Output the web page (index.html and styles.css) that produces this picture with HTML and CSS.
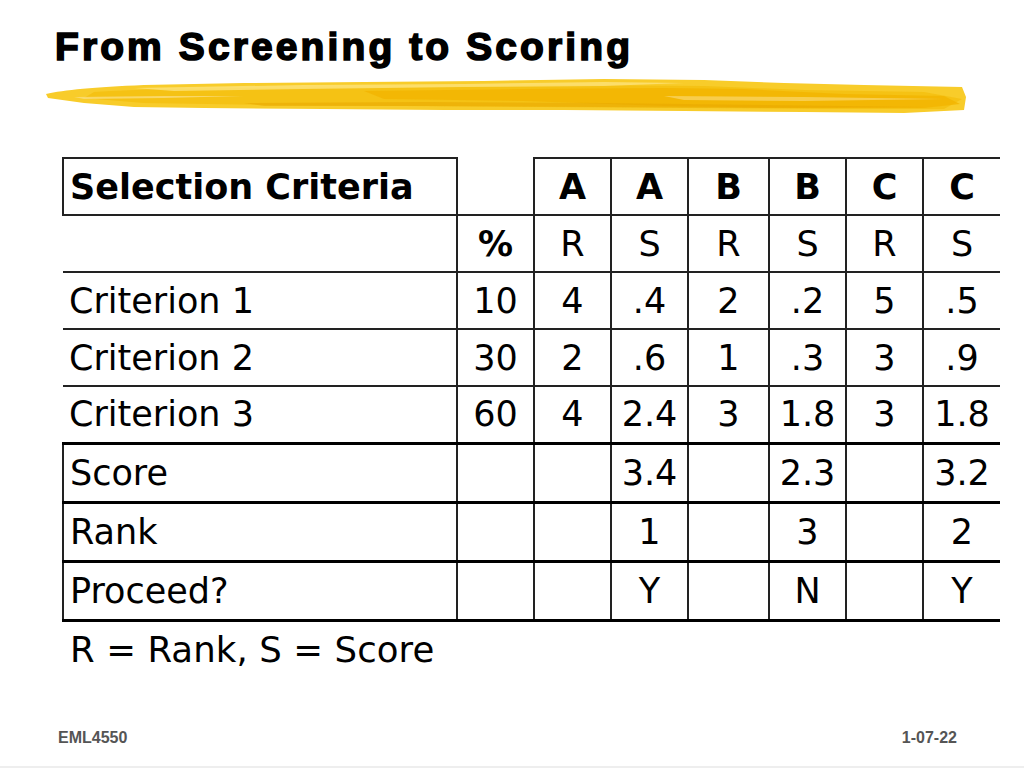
FILE: index.html
```html
<!DOCTYPE html>
<html>
<head>
<meta charset="utf-8">
<link rel="stylesheet" href="styles.css">
</head>
<body>
<div class="slide">
  <h1 class="title">From Screening to Scoring</h1>
  <svg class="brush" width="924" height="38" viewBox="0 0 924 38">
    <path d="M2 17 C20 13 50 10 100 8 L200 6 L320 5 L440 4 L560 2 L660 3 L740 6 L820 8 L918 10 L922 20 L920 33 L860 36 L760 35 L640 34 L520 33 L400 33 L280 32 L160 31 L90 30 L40 26 L4 21 Z" fill="#f8cc2a"/>
    <path d="M50 15 C100 12 160 11 240 11 L380 10 L520 8 L660 9 L760 13 L880 15 L918 22 L900 32 L780 32 L640 31 L500 30 L360 29 L220 28 L100 26 L40 21 Z" fill="#f5c010" opacity="0.85"/>
    <path d="M320 14 L480 12 L620 11 L700 12 L800 17 L900 19 L916 27 L880 31 L760 31 L620 29 L480 24 L340 22 Z" fill="#f2b400" opacity="0.8"/>
    <path d="M90 11 L260 8 L420 7 L560 5 L640 6 L560 9 L420 10 L260 12 L130 14 Z" fill="#fde27a" opacity="0.8"/>
    <path d="M200 26 L380 25 L560 26 L720 28 L880 30 L720 31 L560 30 L380 29 L220 29 Z" fill="#e8a800" opacity="0.55"/>
    <path d="M620 19 L760 20 L900 22 L760 24 L640 23 Z" fill="#fbe08a" opacity="0.55"/>
    <path d="M30 20 L120 19 L200 19 L120 21 L40 22 Z" fill="#fbe08a" opacity="0.7"/>
  </svg>
  <table class="grid">
    <colgroup>
      <col class="c-label"><col class="c-pct"><col class="c-n"><col class="c-n"><col class="c-w"><col class="c-n"><col class="c-n"><col class="c-n">
    </colgroup>
    <tr class="head">
      <th class="sel">Selection Criteria</th>
      <th class="blank"></th>
      <th>A</th><th>A</th><th>B</th><th>B</th><th>C</th><th class="last">C</th>
    </tr>
    <tr class="sub">
      <td class="lbl"></td>
      <th>%</th>
      <td>R</td><td>S</td><td>R</td><td>S</td><td>R</td><td class="last">S</td>
    </tr>
    <tr>
      <td class="lbl">Criterion 1</td><td>10</td><td>4</td><td>.4</td><td>2</td><td>.2</td><td>5</td><td class="last">.5</td>
    </tr>
    <tr>
      <td class="lbl">Criterion 2</td><td>30</td><td>2</td><td>.6</td><td>1</td><td>.3</td><td>3</td><td class="last">.9</td>
    </tr>
    <tr>
      <td class="lbl">Criterion 3</td><td>60</td><td>4</td><td>2.4</td><td>3</td><td>1.8</td><td>3</td><td class="last">1.8</td>
    </tr>
    <tr class="tot">
      <td class="lbl">Score</td><td></td><td></td><td>3.4</td><td></td><td>2.3</td><td></td><td class="last">3.2</td>
    </tr>
    <tr class="tot">
      <td class="lbl">Rank</td><td></td><td></td><td>1</td><td></td><td>3</td><td></td><td class="last">2</td>
    </tr>
    <tr class="tot">
      <td class="lbl">Proceed?</td><td></td><td></td><td>Y</td><td></td><td>N</td><td></td><td class="last">Y</td>
    </tr>
  </table>
  <p class="note">R = Rank, S = Score</p>
  <div class="footer">
    <span>EML4550</span>
    <span>1-07-22</span>
  </div>
</div>
</body>
</html>
```
FILE: styles.css
```css
html, body {
  margin: 0;
  padding: 0;
  background: #ffffff;
}
.slide {
  width: 1024px;
  height: 768px;
  box-sizing: border-box;
  position: relative;
  border-bottom: 2px solid #eeeeee;
  display: flex;
  flex-direction: column;
}
.title {
  margin: 24px 0 0 55px;
  font-family: "Liberation Sans", Arial, sans-serif;
  font-weight: bold;
  font-size: 39px;
  line-height: 46px;
  color: #000;
  -webkit-text-stroke: 1.6px #000;
  letter-spacing: 3.1px;
}
.brush {
  display: block;
  margin: 7px 0 0 44px;
}
.grid {
  margin: 42px 0 0 62px;
  border-collapse: collapse;
  table-layout: fixed;
  width: 936px;
  font-family: "DejaVu Sans", Verdana, sans-serif;
  font-size: 35px;
  color: #000;
}
.c-label { width: 394px; }
.c-pct { width: 77px; }
.c-n { width: 77px; }
.c-w { width: 81px; }
.grid tr { height: 57px; }
.grid tr.tot { height: 59px; }
.grid td, .grid th {
  padding: 0;
  text-align: center;
  vertical-align: middle;
  border: 2px solid #222;
  font-weight: normal;
}
.grid th { font-weight: bold; }
.grid .last { border-right: none; }
.grid .lbl {
  text-align: left;
  padding-left: 6px;
  border-left: none;
}
.grid .sel {
  text-align: left;
  padding-left: 6px;
  border: 2px solid #222;
}
.grid .blank {
  border-top: none;
}
.grid tr.tot td { border-top-width: 3px; border-top-color: #000; }
.grid tr.tot td.lbl { border-left: 2px solid #222; }
.grid tr.tot:last-child td { border-bottom: 3px solid #000; }
.note {
  margin: 6px 0 0 70px;
  font-family: "DejaVu Sans", Verdana, sans-serif;
  font-size: 35.5px;
  line-height: 44px;
  letter-spacing: 0.1px;
}
.footer {
  margin: auto 67px 19px 58px;
  display: flex;
  justify-content: space-between;
  font-family: "Liberation Sans", Arial, sans-serif;
  font-weight: bold;
  font-size: 16px;
  color: #555;
}
```
